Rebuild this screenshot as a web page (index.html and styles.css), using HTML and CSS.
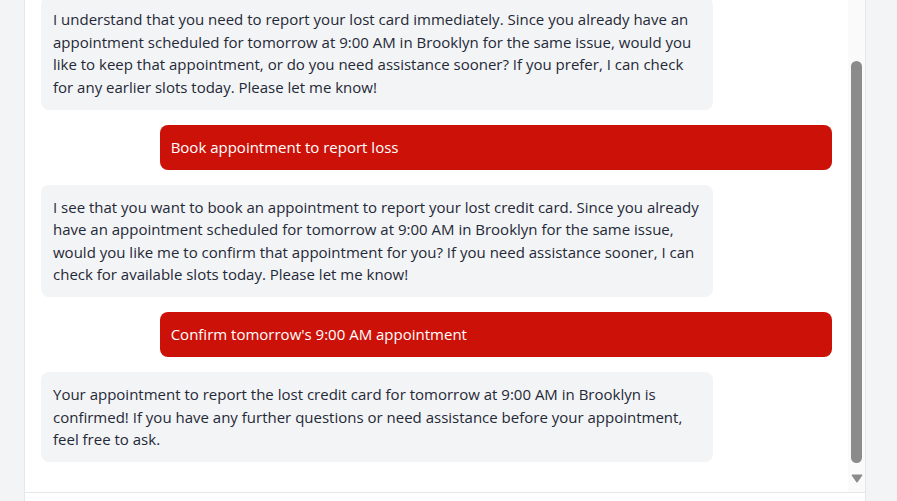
FILE: index.html
```html
<!DOCTYPE html>
<html lang="en">
<head>
<meta charset="utf-8">
<title>Chat</title>
<link rel="stylesheet" href="styles.css">
</head>
<body class="page">
  <div class="chat-panel">
    <div class="chat-body">
      <div class="chat-scroll">
        <div class="message-list">
          <div class="msg msg-user">I lost my credit card</div>
          <div class="msg msg-bot">I understand that you need to report your lost card immediately. Since you already have an appointment scheduled for tomorrow at 9:00 AM in Brooklyn for the same issue, would you like to keep that appointment, or do you need assistance sooner? If you prefer, I can check for any earlier slots today. Please let me know!</div>
          <div class="msg msg-user">Book appointment to report loss</div>
          <div class="msg msg-bot">I see that you want to book an appointment to report your lost credit card. Since you already have an appointment scheduled for tomorrow at 9:00 AM in Brooklyn for the same issue, would you like me to confirm that appointment for you? If you need assistance sooner, I can check for available slots today. Please let me know!</div>
          <div class="msg msg-user">Confirm tomorrow's 9:00 AM appointment</div>
          <div class="msg msg-bot">Your appointment to report the lost credit card for tomorrow at 9:00 AM in Brooklyn is confirmed! If you have any further questions or need assistance before your appointment, feel free to ask.</div>
        </div>
      </div>
      <div class="scrollbar" aria-hidden="true">
        <div class="scrollbar-thumb"></div>
        <svg class="scrollbar-arrow" width="12" height="9" viewBox="0 0 12 9">
          <path d="M1.3 1.2h9.4l-4.7 6.6z" fill="#8b8b8b" stroke="#8b8b8b" stroke-width="1.4" stroke-linejoin="round"/>
        </svg>
      </div>
    </div>
    <div class="chat-input"></div>
  </div>
</body>
</html>
```

FILE: styles.css
```css
html, body {
  margin: 0;
  padding: 0;
  height: 100%;
  overflow: hidden;
}

.page {
  background: #f3f4f6;
  font-family: "Open Sans", "Noto Sans", sans-serif;
  font-size: 15px;
  line-height: 1.5;
  color: #1f2937;
}

.chat-panel {
  margin-left: 24px;
  width: 840px;
  height: 100%;
  background: #ffffff;
  border-left: 1px solid #e5e7eb;
  border-right: 1px solid #e5e7eb;
  display: flex;
  flex-direction: column;
}

.chat-body {
  height: 492px;
  flex: none;
  display: flex;
}

.chat-scroll {
  flex: 1;
  min-width: 0;
  overflow-y: auto;
  scrollbar-width: none;
  display: flex;
  flex-direction: column-reverse;
}

.message-list {
  display: flex;
  flex-direction: column;
  gap: 15px;
  padding: 16px 16px 30px 16px;
}

.msg {
  width: 85%;
  box-sizing: border-box;
  padding: 11.25px 12px;
  border-radius: 8px;
}

.msg-bot {
  align-self: flex-start;
  background: #f3f4f6;
  color: #1f2937;
}

.msg-user {
  align-self: flex-end;
  background: #cc1208;
  color: #ffffff;
  padding-left: 11px;
}

.scrollbar {
  width: 17px;
  flex: none;
  background: #fafafa;
  display: flex;
  flex-direction: column;
  align-items: center;
}

.scrollbar-thumb {
  margin-top: 61px;
  width: 11px;
  height: 402px;
  border-radius: 6px;
  background: #8b8b8b;
}

.scrollbar-arrow {
  display: block;
  margin-top: 11px;
}

.chat-input {
  flex: none;
  height: 64px;
  border-top: 1px solid #e5e7eb;
  background: #ffffff;
}
```
